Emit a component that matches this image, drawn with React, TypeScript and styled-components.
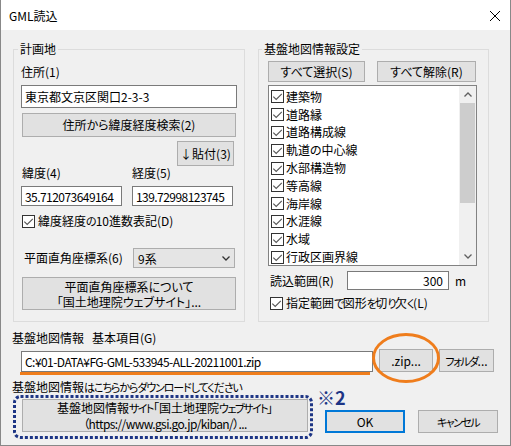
import styled, { createGlobalStyle } from 'styled-components';

const GlobalStyle = createGlobalStyle`
  html, body {
    margin: 0;
    padding: 0;
    background: #ffffff;
  }
  body {
    font-family: "Noto Sans CJK JP", "Noto Sans", sans-serif;
    font-size: 12px;
    color: #000;
    font-feature-settings: "palt";
  }
  button, input {
    font-family: inherit;
    font-size: inherit;
    font-feature-settings: inherit;
    color: inherit;
  }
`;

const LAYERS = [
  '建築物',
  '道路縁',
  '道路構成線',
  '軌道の中心線',
  '水部構造物',
  '等高線',
  '海岸線',
  '水涯線',
  '水域',
  '行政区画界線',
];

const ORANGE = '#ef7d1c';
const NAVY = '#1d3585';

const Window = styled.div`
  box-sizing: border-box;
  width: 511px;
  height: 446px;
  display: flex;
  flex-direction: column;
  overflow: hidden;
  background: #f0f0f0;
  border: 1px solid #888;
  border-top: none;
`;

const TitleBar = styled.div`
  box-sizing: border-box;
  flex: none;
  height: 30px;
  display: flex;
  align-items: center;
  justify-content: space-between;
  padding: 1px 10px 0 8px;
  background: #fff;
  line-height: 16px;
`;

const TopRow = styled.div`
  display: flex;
  gap: 13px;
  margin-top: 11px;
  padding-left: 12px;
`;

const Group = styled.fieldset<{ $w: number; $pl: number; $pr: number }>`
  box-sizing: border-box;
  width: ${p => p.$w}px;
  height: 281px;
  min-width: 0;
  margin: 0;
  padding: 0 ${p => p.$pr}px 0 ${p => p.$pl}px;
  border: 1px solid #dcdcdc;
  display: flex;
  flex-direction: column;
`;

const Legend = styled.legend<{ $ml: number }>`
  padding: 0 2px;
  margin-left: ${p => p.$ml}px;
  line-height: 16px;
`;

const Label = styled.div<{ $mt?: number; $ml?: number; $lh?: number }>`
  margin-top: ${p => p.$mt ?? 0}px;
  margin-left: ${p => p.$ml ?? 0}px;
  line-height: ${p => p.$lh ?? 16}px;
  white-space: nowrap;
`;

// kana in the Windows UI font are narrower than the kanji
const Kana = styled.span<{ $ls?: number }>`
  font-size: 11px;
  letter-spacing: ${p => p.$ls ?? -1.5}px;
`;

const Tight = styled.span<{ $ls: number }>`
  letter-spacing: ${p => p.$ls}px;
`;

const Spacer = styled.span<{ $w: number }>`
  display: inline-block;
  width: ${p => p.$w}px;
`;

const Field = styled.input<{ $w?: number; $h: number; $mt?: number; $right?: boolean; $tight?: boolean }>`
  box-sizing: border-box;
  flex: none;
  width: ${p => (p.$w ? `${p.$w}px` : '100%')};
  height: ${p => p.$h}px;
  margin: ${p => p.$mt ?? 0}px 0 0;
  padding: 0 ${p => (p.$right ? 5 : 2)}px 0 3px;
  border: 1px solid #7a7a7a;
  border-radius: 0;
  background: #fff;
  outline: none;
  letter-spacing: ${p => (p.$tight ? '-0.55px' : 'normal')};
  text-align: ${p => (p.$right ? 'right' : 'left')};
`;

const Button = styled.button<{ $w?: number; $h: number; $mt?: number; $mx?: number; $lh?: number; $focus?: boolean }>`
  box-sizing: border-box;
  flex: none;
  width: ${p => (p.$w ? `${p.$w}px` : `calc(100% - ${(p.$mx ?? 0) * 2}px)`)};
  height: ${p => p.$h}px;
  margin: ${p => p.$mt ?? 0}px ${p => p.$mx ?? 0}px 0;
  padding: 0;
  background: #e1e1e1;
  border: ${p => (p.$focus ? '2px solid #0078d7' : '1px solid #adadad')};
  border-radius: 0;
  line-height: ${p => p.$lh ?? 14}px;
  white-space: nowrap;
  cursor: default;
`;

const PasteButton = styled(Button)`
  align-self: flex-end;
  margin-right: 3px;
`;

const CoordGrid = styled.div`
  display: grid;
  grid-template-columns: 101px 101px;
  grid-template-rows: 14px 20px;
  column-gap: 10px;
  row-gap: 6px;
  line-height: 14px;
`;

const CheckRow = styled.div<{ $mt?: number; $ml?: number; $gap?: number }>`
  display: flex;
  align-items: center;
  gap: ${p => p.$gap ?? 3}px;
  height: 16px;
  margin-top: ${p => p.$mt ?? 0}px;
  margin-left: ${p => p.$ml ?? 0}px;
  line-height: 16px;
  white-space: nowrap;
`;

const CheckBox = styled.span`
  box-sizing: border-box;
  flex: none;
  width: 13px;
  height: 13px;
  display: flex;
  align-items: center;
  justify-content: center;
  border: 1px solid #333;
  background: #fff;
`;

const SelectRow = styled.div`
  display: flex;
  align-items: center;
  margin-top: 19px;
  height: 20px;
`;

const Select = styled.div`
  box-sizing: border-box;
  width: 102px;
  height: 20px;
  margin: 0 2px 0 auto;
  padding: 0 4px;
  display: flex;
  align-items: center;
  justify-content: space-between;
  border: 1px solid #adadad;
  background: #e5e5e5;
`;

const ButtonRow = styled.div<{ $mt?: number; $gap: number }>`
  display: flex;
  gap: ${p => p.$gap}px;
  margin-top: ${p => p.$mt ?? 0}px;
`;

const ListBox = styled.div`
  box-sizing: border-box;
  width: 209px;
  height: 181px;
  margin-top: 3px;
  display: flex;
  border: 1px solid #828282;
  background: #fff;
`;

const ListItems = styled.div`
  flex: 1;
  overflow: hidden;
  padding: 2px 0 0 2px;
`;

const ListItem = styled.div`
  height: 17.8px;
  display: flex;
  align-items: center;
  gap: 2px;
  line-height: 16px;
  white-space: nowrap;
`;

const ScrollBar = styled.div`
  flex: none;
  width: 17px;
  display: flex;
  flex-direction: column;
  align-items: center;
  background: #f0f0f0;
`;

const ScrollArrow = styled.div`
  width: 17px;
  height: 17px;
  display: flex;
  align-items: center;
  justify-content: center;
`;

const ScrollThumb = styled.div`
  width: 15px;
  height: 100px;
  background: #cdcdcd;
`;

const ScrollSpace = styled.div`
  flex: 1;
`;

const RangeRow = styled.div`
  display: flex;
  align-items: center;
  margin-top: 5px;
  height: 19px;
`;

const RangeLabel = styled.span`
  flex: none;
  width: 77px;
  margin-left: 2px;
`;

const Unit = styled.span`
  margin-left: 6px;
`;

const Bottom = styled.div`
  display: flex;
  flex-direction: column;
  padding-left: 11px;
`;

const PathRow = styled.div`
  display: flex;
  align-items: flex-end;
  gap: 6px;
  margin-top: 3px;
  height: 23px;
  padding-left: 9px;
`;

const PathWrap = styled.div`
  position: relative;
  &::after {
    content: '';
    position: absolute;
    left: -1px;
    top: 100%;
    width: 350px;
    height: 3px;
    background: ${ORANGE};
  }
`;

const Marked = styled.div`
  position: relative;
`;

const Ellipse = styled.svg`
  position: absolute;
  left: -7px;
  top: -16px;
  overflow: visible;
  pointer-events: none;
`;

const ActionRow = styled.div`
  display: flex;
  align-items: flex-start;
  margin-left: 1px;
`;

const DottedWrap = styled.div`
  position: relative;
  box-sizing: border-box;
  flex: none;
  width: 300px;
  height: 44px;
  padding: 4px 5px 0 9px;
`;

const DottedFrame = styled.svg`
  position: absolute;
  left: 0;
  top: 0;
  overflow: visible;
  pointer-events: none;
`;

const Note = styled.span`
  position: absolute;
  left: 304px;
  top: -8px;
  font-size: 18px;
  font-weight: 700;
  line-height: 20px;
  color: ${NAVY};
  white-space: nowrap;
`;

const DialogButtons = styled.div`
  display: flex;
  gap: 13px;
  margin: 15px 0 0 12px;
`;

const Check = () => (
  <CheckBox>
    <svg width="11" height="11" viewBox="0 0 11 11">
      <path d="M1.3 5.6 L4.2 8.5 L9.8 2.8" fill="none" stroke="#555" strokeWidth="1.1" />
    </svg>
  </CheckBox>
);

const Chevron = ({ up, color = '#606060' }: { up?: boolean; color?: string }) => (
  <svg width="8" height="5" viewBox="0 0 8 5">
    <path
      d={up ? 'M0.5 4.5 L4 1 L7.5 4.5' : 'M0.5 0.5 L4 4 L7.5 0.5'}
      fill="none"
      stroke={color}
      strokeWidth="1.3"
    />
  </svg>
);

export default function App() {
  return (
    <>
      <GlobalStyle />
      <Window>
        <TitleBar>
          <span>GML読込</span>
          <svg width="10" height="10" viewBox="0 0 10 10">
            <path d="M0 0 L10 10 M10 0 L0 10" stroke="#000" strokeWidth="1" />
          </svg>
        </TitleBar>

        <TopRow>
          <Group $w={232} $pl={7} $pr={7}>
            <Legend $ml={-3}>計画地</Legend>
            <Label $mt={7}>住所(1)</Label>
            <Field $h={23} $mt={5} defaultValue="東京都文京区関口2-3-3" />
            <Button $h={24} $mt={5} $mx={1}>
              住所から緯度経度検索(2)
            </Button>
            <PasteButton $w={57} $h={25} $mt={4}>
              ↓貼付(3)
            </PasteButton>
            <CoordGrid>
              <Label $ml={1} $lh={14}>緯度(4)</Label>
              <Label $lh={14}>経度(5)</Label>
              <Field $h={20} $tight defaultValue="35.712073649164" />
              <Field $h={20} $tight defaultValue="139.72998123745" />
            </CoordGrid>
            <CheckRow $mt={7} $ml={1}>
              <Check />
              <span>
                緯度経度<Kana $ls={-1}>の</Kana>10進数表記(D)
              </span>
            </CheckRow>
            <SelectRow>
              <Label $ml={3}>平面直角座標系(6)</Label>
              <Select>
                <span>9系</span>
                <Chevron color="#333" />
              </Select>
            </SelectRow>
            <Button $h={33} $mt={9} $mx={1} $lh={15}>
              平面直角座標系について
              <br />
              「国土地理院ウェブサイト」...
            </Button>
          </Group>

          <Group $w={231} $pl={9} $pr={10}>
            <Legend $ml={-6}>基盤地図情報設定</Legend>
            <ButtonRow $mt={4} $gap={12}>
              <Button $w={97} $h={21}>
                すべて選択(S)
              </Button>
              <Button $w={99} $h={21}>
                すべて解除(R)
              </Button>
            </ButtonRow>
            <ListBox>
              <ListItems>
                {LAYERS.map(name => (
                  <ListItem key={name}>
                    <Check />
                    {name}
                  </ListItem>
                ))}
              </ListItems>
              <ScrollBar>
                <ScrollArrow>
                  <Chevron up />
                </ScrollArrow>
                <ScrollThumb />
                <ScrollSpace />
                <ScrollArrow>
                  <Chevron />
                </ScrollArrow>
              </ScrollBar>
            </ListBox>
            <RangeRow>
              <RangeLabel>読込範囲(R)</RangeLabel>
              <Field $w={102} $h={19} $right defaultValue="300" />
              <Unit>m</Unit>
            </RangeRow>
            <CheckRow $mt={5} $ml={2}>
              <Check />
              <span>
                指定範囲<Kana>で</Kana>図形<Kana>を</Kana>切<Kana>り</Kana>欠<Kana>く</Kana>(L)
              </span>
            </CheckRow>
          </Group>
        </TopRow>

        <Bottom>
          <Label $mt={8}>
            基盤地図情報
            <Spacer $w={8} />
            基本項目(G)
          </Label>
          <PathRow>
            <PathWrap>
              <Field $w={352} $h={21} $tight defaultValue="C:¥01-DATA¥FG-GML-533945-ALL-20211001.zip" />
            </PathWrap>
            <Marked>
              <Button $w={54} $h={23}>
                .zip...
              </Button>
              <Ellipse width="68" height="50" viewBox="0 0 68 50">
                <ellipse cx="34" cy="25" rx="32.5" ry="23.5" fill="none" stroke={ORANGE} strokeWidth="3" />
              </Ellipse>
            </Marked>
            <Button $w={55} $h={23}>
              <Kana>フォルダ</Kana>...
            </Button>
          </PathRow>
          <Label $mt={7} $lh={15}>
            基盤地図情報<Kana $ls={-1.1}>はこちらからダウンロードしてください</Kana>
          </Label>
          <ActionRow>
            <DottedWrap>
              <Button $w={286} $h={33} $lh={15}>
                基盤地図情報<Kana>サイト</Kana>「国土地理院<Kana>ウェブサイト</Kana>」
                <br />
                <Tight $ls={-0.6}>（https://www.gsi.go.jp/kiban/）...</Tight>
              </Button>
              <DottedFrame width="300" height="44" viewBox="0 0 300 44">
                <rect
                  x="1.5"
                  y="1.5"
                  width="297"
                  height="41"
                  rx="6"
                  fill="none"
                  stroke={NAVY}
                  strokeWidth="3"
                  strokeDasharray="3 2"
                />
              </DottedFrame>
              <Note>※2</Note>
            </DottedWrap>
            <DialogButtons>
              <Button $w={80} $h={23} $focus>
                OK
              </Button>
              <Button $w={80} $h={23}>
                <Kana>キャンセル</Kana>
              </Button>
            </DialogButtons>
          </ActionRow>
        </Bottom>
      </Window>
    </>
  );
}
